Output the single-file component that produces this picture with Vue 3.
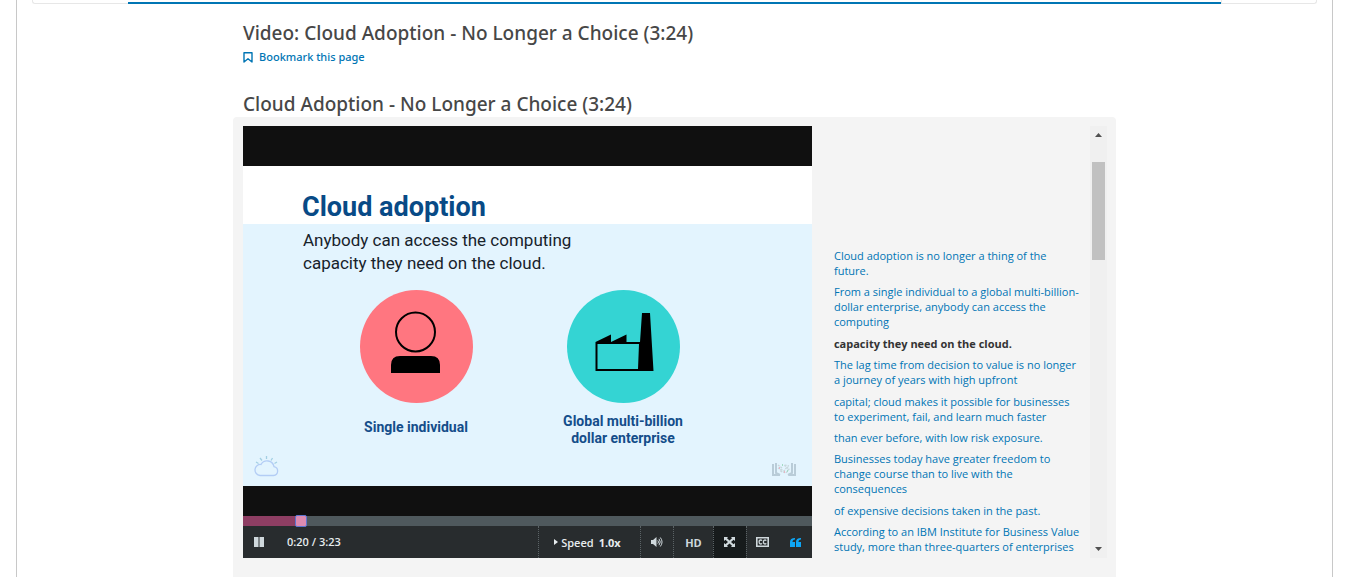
<script setup>
import { ref } from 'vue'

const title = 'Cloud Adoption - No Longer a Choice (3:24)'
const position = ref(19)
const duration = 203
const captions = [
  'Cloud adoption is no longer a thing of the future.',
  'From a single individual to a global multi-billion-dollar enterprise, anybody can access the computing',
  'capacity they need on the cloud.',
  'The lag time from decision to value is no longer a journey of years with high upfront',
  'capital; cloud makes it possible for businesses to experiment, fail, and learn much faster',
  'than ever before, with low risk exposure.',
  'Businesses today have greater freedom to change course than to live with the consequences',
  'of expensive decisions taken in the past.',
  'According to an IBM Institute for Business Value study, more than three-quarters of enterprises',
]
const current = ref(2)
</script>

<template>
  <div class="page">
    <nav class="sequence" aria-label="Sequence">
      <button class="step prev" aria-label="Previous"></button>
      <div class="tabs"></div>
      <button class="step next" aria-label="Next"></button>
    </nav>

    <main class="content">
      <h1 class="heading">Video: {{ title }}</h1>
      <button class="bookmark">
        <svg width="10" height="11" viewBox="0 0 10 11" fill="none" stroke="currentColor" stroke-width="1.4">
          <path d="M1 .8H9V10L5 6.8L1 10Z" stroke-linejoin="round" />
        </svg>
        Bookmark this page
      </button>
      <h2 class="heading second">{{ title }}</h2>

      <section class="player">
        <div class="video">
          <div class="slide">
            <div class="slide-title">Cloud adoption</div>
            <div class="slide-body">
              <p class="lead">Anybody can access the computing<br>capacity they need on the cloud.</p>
              <div class="figures">
                <figure>
                  <svg class="disc" viewBox="0 0 113 113">
                    <circle cx="56.5" cy="56.5" r="56.5" fill="#ff7680" />
                    <circle cx="55.5" cy="42" r="19.5" fill="none" stroke="#000" stroke-width="2" />
                    <path d="M31 83V75Q31 66 40 66H71Q80 66 80 75V83Z" />
                  </svg>
                  <figcaption class="single">Single individual</figcaption>
                </figure>
                <figure>
                  <svg class="disc" viewBox="0 0 113 113">
                    <circle cx="56.5" cy="56.5" r="56.5" fill="#34d4d3" />
                    <path d="M28.500 81V52L44 44.500V52L59.500 44.500V52H73L75 23H83L86.500 81H28.500ZM30.500 54V79H71L72 54Z" fill-rule="evenodd" />
                  </svg>
                  <figcaption>Global multi-billion<br>dollar enterprise</figcaption>
                </figure>
              </div>
              <div class="marks">
                <svg width="26" height="22" viewBox="0 0 26 22" fill="none" stroke-width="1.3">
                  <path d="M6 20.500H19.500A4.500 4.500 0 0 0 20 11.600A7 7 0 0 0 7 9.500A5.500 5.500 0 0 0 6 20.500Z" stroke="#b3cdf5" />
                  <path d="M2 7L4.500 8.500M6 3L8 5.500M12.500 1V4M18.500 3L17 5.500M23 7L20.500 8.500" stroke="#a3cfe3" />
                </svg>
                <svg width="24" height="14" viewBox="0 0 24 14" fill="none" stroke-width="2">
                  <path d="M1 1V12H8M4 0V10L8 12M23 1V12H16M20 0V10L16 12" stroke="#b9ccd8" />
                  <path d="M6 2L10 5L8 8L14 10L17 6L12 2L17 3M6 5L12 8L15 4" stroke="#c8d7dc" stroke-width="1.4" stroke-dasharray="2 1" />
                  <path d="M7 5H8M12 9H13" stroke="#e7b5c3" />
                  <path d="M10 2H11M15 8H16" stroke="#a4dcc4" />
                </svg>
              </div>
            </div>
          </div>

          <input v-model="position" class="progress" type="range" min="0" :max="duration" aria-label="Video position">

          <div class="controls">
            <button class="pause" aria-label="Pause">
              <svg width="10" height="10" viewBox="0 0 10 10"><path d="M0 0H4.500V10H0ZM5.500 0H10V10H5.500Z" fill="currentColor" /></svg>
            </button>
            <span class="time">0:20 / 3:23</span>
            <button class="ctl speed">
              <svg width="4" height="6" viewBox="0 0 4 6"><path d="M0 0L4 3L0 6Z" fill="currentColor" /></svg>
              <span>Speed</span><b>1.0x</b>
            </button>
            <button class="ctl" aria-label="Volume">
              <svg width="12" height="10" viewBox="0 0 12 10">
                <path d="M0 3H2L5.500 0V10L2 7H0Z" fill="currentColor" />
                <path d="M6.800 3.400Q8.200 5 6.800 6.600M8 1.800Q10.500 5 8 8.200M9.300 .5Q12.800 5 9.300 9.500" fill="none" stroke="currentColor" stroke-width="1" />
              </svg>
            </button>
            <button class="ctl hd">HD</button>
            <button class="ctl full" aria-label="Fill browser">
              <svg width="11" height="10" viewBox="0 0 11 10">
                <path d="M0 0H4L3 1.200L5.500 3.600L8 1.200L7 0H11V4L9.600 2.700L7 5L9.600 7.300L11 6V10H7L8 8.800L5.500 6.400L3 8.800L4 10H0V6L1.400 7.300L4 5L1.400 2.700L0 4Z" fill="currentColor" />
              </svg>
            </button>
            <button class="ctl cc" aria-label="Closed captions">
              <svg width="13" height="10" viewBox="0 0 13 10" fill="none" stroke="currentColor">
                <path d="M.8 .8H12.200V9.200H.8Z" stroke-width="1.6" />
                <path d="M6 3.700Q5.500 3 4.600 3Q3.100 3 3.100 5Q3.100 7 4.600 7Q5.500 7 6 6.300M10.300 3.700Q9.800 3 8.900 3Q7.400 3 7.400 5Q7.400 7 8.900 7Q9.800 7 10.300 6.300" stroke-width="1.300" />
              </svg>
            </button>
            <button class="ctl quote" aria-label="Transcript">
              <svg width="11" height="9" viewBox="0 0 11 9" fill="currentColor">
                <path d="M5 0V1.500Q2.500 1.500 2.500 4H5V9H0V4Q0 0 5 0ZM11 0V1.500Q8.500 1.500 8.500 4H11V9H6V4Q6 0 11 0Z" />
              </svg>
            </button>
          </div>
        </div>

        <div class="transcript">
          <ol class="lines">
            <li v-for="(line, i) in captions" :key="i">
              <a href="#" :class="{ current: i === current }" @click.prevent="current = i">{{ line }}</a>
            </li>
          </ol>
          <div class="scrollbar" aria-hidden="true">
            <svg width="7" height="4" viewBox="0 0 7 4"><path d="M0 4L3.500 0L7 4Z" fill="#505050" /></svg>
            <div class="thumb"></div>
            <svg class="down" width="7" height="4" viewBox="0 0 7 4"><path d="M0 0L3.500 4L7 0Z" fill="#505050" /></svg>
          </div>
        </div>
      </section>
    </main>
  </div>
</template>

<style>
body {
  background: #fff;
}
</style>

<style scoped>
* {
  box-sizing: border-box;
}
.page {
  margin: 0 16px;
  padding: 0 15px;
  min-height: 100vh;
  border: solid #c8c8c8;
  border-width: 0 1px;
  font-family: "Open Sans", sans-serif;
  color: #474747;
}
button {
  font: inherit;
  color: inherit;
  background: none;
  border: 0;
  padding: 0;
  cursor: pointer;
}
.sequence {
  display: flex;
  height: 4px;
}
.step {
  width: 96px;
  border: 1px solid #e7e7e7;
  border-top: 0;
}
.prev {
  border-right: 0;
  border-radius: 0 0 0 3px;
}
.next {
  border-radius: 0 0 3px 0;
}
.tabs {
  flex: 1;
  border-bottom: 2px solid #0075b4;
}
.content {
  max-width: 883px;
  margin: 0 auto;
}
.heading {
  margin: 0 10px;
  padding-top: 15px;
  font-family: "Noto Sans", "Open Sans", sans-serif;
  font-size: 19px;
  line-height: 28px;
  font-weight: 500;
}
.bookmark {
  display: flex;
  align-items: center;
  gap: 6px;
  margin: 2px 10px 0;
  font-family: "Noto Sans", sans-serif;
  font-size: 11px;
  font-weight: 500;
  line-height: 16px;
  color: #0075b4;
}
.second {
  padding-top: 26px;
  line-height: 26px;
}
.player {
  display: grid;
  grid-template-columns: 27fr 14fr;
  padding: 9px 9px 19px 10px;
  background: #f4f4f4;
  border-radius: 4px 4px 0 0;
}
.video {
  padding-top: 40px;
  background: #101010;
}
.slide {
  margin-bottom: 30px;
  background: #fff;
  font-family: Roboto, sans-serif;
}
.slide-title {
  height: 58px;
  padding: 25px 0 0 59px;
  font-size: 27px;
  line-height: 32px;
  font-weight: 700;
  color: #084a86;
}
.slide-body {
  height: 262px;
  padding-top: 5px;
  background: #e3f4fe;
}
.lead {
  margin: 0 0 15px 60px;
  font-size: 17px;
  line-height: 23px;
  color: #17222b;
}
.figures {
  display: flex;
  gap: 47px;
  margin-left: 93px;
}
figure {
  width: 160px;
  margin: 0;
  text-align: center;
}
.disc {
  display: block;
  width: 113px;
  height: 113px;
  margin: 0 auto 10px;
}
figcaption {
  height: 34px;
  font-size: 14px;
  line-height: 17px;
  font-weight: 700;
  color: #144d8a;
}
.single {
  padding-top: 6px;
}
.marks {
  display: flex;
  justify-content: space-between;
  align-items: flex-end;
  margin: 8px 16px 0 11px;
}
.progress {
  appearance: none;
  display: block;
  width: 100%;
  height: 10px;
  margin: 0;
  background: linear-gradient(to right, #8e3e63 10%, #4f595d 10%);
}
.progress::-webkit-slider-thumb {
  appearance: none;
  width: 12px;
  height: 12px;
  background: #dd8bb1;
  border: 1px solid #5c74cf;
  border-radius: 2px;
}
.controls {
  display: flex;
  height: 32px;
  background: #282c2e;
  font-size: 11px;
  font-weight: 600;
  color: #e7ecee;
}
.controls svg {
  display: block;
}
.pause {
  width: 32px;
  padding-left: 11px;
  color: #cfd8dc;
}
.time {
  flex: 1;
  padding-left: 12px;
  line-height: 32px;
}
.ctl {
  display: flex;
  align-items: center;
  justify-content: center;
  width: 33px;
  border-left: 1px dotted #5b6366;
  color: #cfd8dc;
}
.ctl b {
  margin-left: 2px;
  font-weight: 700;
}
.speed {
  gap: 3px;
  width: 102px;
  padding-right: 4px;
  color: #e7ecee;
}
.hd {
  width: 40px;
  font-weight: 700;
}
.full {
  background: #171b1c;
}
.quote {
  border: 0;
  color: #0ea6f5;
}
.transcript {
  display: flex;
  padding-left: 22px;
}
.lines {
  flex: 1;
  display: flex;
  flex-direction: column;
  justify-content: space-between;
  margin: 0;
  padding: 122px 8px 4px 0;
  list-style: none;
  font-size: 11px;
  line-height: 15px;
}
.lines a {
  display: block;
  color: #0075b4;
  text-decoration: none;
}
.lines .current {
  font-weight: 700;
  color: #333;
}
.scrollbar {
  display: flex;
  flex-direction: column;
  align-items: center;
  width: 17px;
  padding: 7px 0;
  background: #f0f0f0;
}
.thumb {
  width: 13px;
  height: 98px;
  margin-top: 25px;
  background: #c1c1c1;
}
.down {
  margin-top: auto;
}
</style>
